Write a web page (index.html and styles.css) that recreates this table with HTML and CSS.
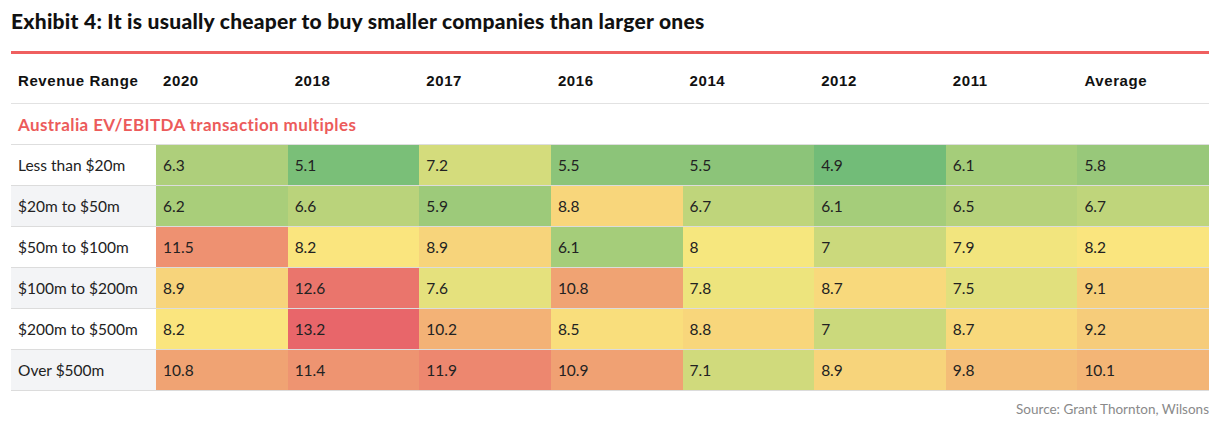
FILE: index.html
```html
<!DOCTYPE html>
<html>
<head>
<meta charset="utf-8">
<link rel="stylesheet" href="styles.css">
</head>
<body>
<div class="page">
  <h1 class="title">Exhibit 4: It is usually cheaper to buy smaller companies than larger ones</h1>
  <table class="grid">
    <colgroup>
      <col class="c-first"><col><col><col><col><col><col><col><col>
    </colgroup>
    <thead>
      <tr class="head">
        <th>Revenue Range</th><th>2020</th><th>2018</th><th>2017</th><th>2016</th><th>2014</th><th>2012</th><th>2011</th><th>Average</th>
      </tr>
    </thead>
    <tbody>
      <tr class="sub"><td colspan="9">Australia EV/EBITDA transaction multiples</td></tr>
      <tr class="row"><td class="lab">Less than $20m</td><td class="v">6.3</td><td class="v">5.1</td><td class="v">7.2</td><td class="v">5.5</td><td class="v">5.5</td><td class="v">4.9</td><td class="v">6.1</td><td class="v">5.8</td></tr>
      <tr class="row alt"><td class="lab">$20m to $50m</td><td class="v">6.2</td><td class="v">6.6</td><td class="v">5.9</td><td class="v">8.8</td><td class="v">6.7</td><td class="v">6.1</td><td class="v">6.5</td><td class="v">6.7</td></tr>
      <tr class="row"><td class="lab">$50m to $100m</td><td class="v">11.5</td><td class="v">8.2</td><td class="v">8.9</td><td class="v">6.1</td><td class="v">8</td><td class="v">7</td><td class="v">7.9</td><td class="v">8.2</td></tr>
      <tr class="row alt"><td class="lab">$100m to $200m</td><td class="v">8.9</td><td class="v">12.6</td><td class="v">7.6</td><td class="v">10.8</td><td class="v">7.8</td><td class="v">8.7</td><td class="v">7.5</td><td class="v">9.1</td></tr>
      <tr class="row"><td class="lab">$200m to $500m</td><td class="v">8.2</td><td class="v">13.2</td><td class="v">10.2</td><td class="v">8.5</td><td class="v">8.8</td><td class="v">7</td><td class="v">8.7</td><td class="v">9.2</td></tr>
      <tr class="row alt"><td class="lab">Over $500m</td><td class="v">10.8</td><td class="v">11.4</td><td class="v">11.9</td><td class="v">10.9</td><td class="v">7.1</td><td class="v">8.9</td><td class="v">9.8</td><td class="v">10.1</td></tr>
    </tbody>
  </table>
  <div class="source">Source: Grant Thornton, Wilsons</div>
</div>
<script src="script.js"></script>
</body>
</html>
```
FILE: styles.css
```css
html, body {
  margin: 0;
  padding: 0;
  background: #ffffff;
}
.page {
  padding: 9px 7px 0 11px;
  font-family: Lato, "Noto Sans", sans-serif;
  color: #222;
}
.title {
  margin: 0;
  font-family: Lato, sans-serif;
  font-weight: 900;
  font-size: 21px;
  line-height: 24px;
  color: #111;
  letter-spacing: 0.25px;
}
.grid {
  margin-top: 18px;
  width: 1198px;
  border-collapse: collapse;
  table-layout: fixed;
}
.c-first { width: 145px; }
.head th {
  height: 46px;
  padding: 3px 0 0 7px;
  text-align: left;
  font-family: "Liberation Sans", Arial, sans-serif;
  font-weight: 700;
  font-size: 15px;
  letter-spacing: 0.6px;
  color: #111;
  border-top: 3px solid #ef5f5f;
  border-bottom: 1px solid #e2e2e2;
}
.sub td {
  height: 40px;
  padding: 0 0 0 7px;
  font-weight: 700;
  font-size: 17px;
  letter-spacing: 0.4px;
  color: #ec5b5b;
  border-bottom: 1px solid #dedede;
}
.row td {
  height: 40px;
  padding: 0 0 0 7px;
  font-size: 15.5px;
  color: #222;
  border-bottom: 1px solid #dcdcdc;
}
.row .lab { background: #ffffff; }
.row.alt .lab { background: #f3f4f6; }
.source {
  margin-top: 10px;
  width: 1198px;
  text-align: right;
  font-size: 13.5px;
  color: #8a8a8a;
}
```
FILE: script.js
```js
(function () {
  var cells = document.querySelectorAll('td.v');
  var min = 4.9, mid = 8.1, max = 13.2;
  var g = [114, 188, 120], y = [250, 232, 126], r = [232, 102, 106];
  function mix(a, b, t) {
    return [0, 1, 2].map(function (i) { return Math.round(a[i] + (b[i] - a[i]) * t); });
  }
  cells.forEach(function (c) {
    var v = parseFloat(c.textContent);
    var col = v <= mid ? mix(g, y, (v - min) / (mid - min)) : mix(y, r, (v - mid) / (max - mid));
    c.style.backgroundColor = 'rgb(' + col.join(',') + ')';
  });
})();
```
